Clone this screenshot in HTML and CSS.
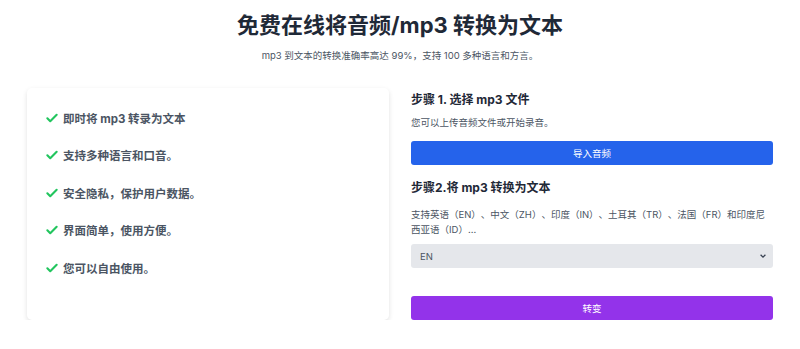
FILE: index.html
```html
<!DOCTYPE html>
<html lang="zh-CN">
<head>
    <meta charset="UTF-8">
    <meta name="viewport" content="width=device-width, initial-scale=1.0">
    <title>免费在线将音频/mp3 转换为文本</title>
    <link rel="stylesheet" href="styles.css">
</head>
<body>
    <div class="page">
        <div class="header">
            <h1>免费在线将音频/mp3 转换为文本</h1>
            <p class="subtitle">mp3 到文本的转换准确率高达 99%，支持 100 多种语言和方言。</p>
        </div>
        <div class="columns">
            <div class="card">
                <ul class="features">
                    <li><span class="check"><svg viewBox="0 0 24 24" width="14" height="14"><path d="M4 12.5l5 5L20 6.5" fill="none" stroke="#22c55e" stroke-width="3.6" stroke-linecap="round" stroke-linejoin="round"/></svg></span>即时将 mp3 转录为文本</li>
                    <li><span class="check"><svg viewBox="0 0 24 24" width="14" height="14"><path d="M4 12.5l5 5L20 6.5" fill="none" stroke="#22c55e" stroke-width="3.6" stroke-linecap="round" stroke-linejoin="round"/></svg></span>支持多种语言和口音。</li>
                    <li><span class="check"><svg viewBox="0 0 24 24" width="14" height="14"><path d="M4 12.5l5 5L20 6.5" fill="none" stroke="#22c55e" stroke-width="3.6" stroke-linecap="round" stroke-linejoin="round"/></svg></span>安全隐私，保护用户数据。</li>
                    <li><span class="check"><svg viewBox="0 0 24 24" width="14" height="14"><path d="M4 12.5l5 5L20 6.5" fill="none" stroke="#22c55e" stroke-width="3.6" stroke-linecap="round" stroke-linejoin="round"/></svg></span>界面简单，使用方便。</li>
                    <li><span class="check"><svg viewBox="0 0 24 24" width="14" height="14"><path d="M4 12.5l5 5L20 6.5" fill="none" stroke="#22c55e" stroke-width="3.6" stroke-linecap="round" stroke-linejoin="round"/></svg></span>您可以自由使用。</li>
                </ul>
            </div>
            <div class="steps">
                <h3>步骤 1. 选择 mp3 文件</h3>
                <p class="hint">您可以上传音频文件或开始录音。</p>
                <button class="btn btn-blue">导入音频</button>
                <h3 class="step-two">步骤2.将 mp3 转换为文本</h3>
                <p class="hint langs">支持英语（EN）、中文（ZH）、印度（IN）、土耳其（TR）、法国（FR）和印度尼西亚语（ID）...</p>
                <div class="select">
                    <span>EN</span>
                    <svg viewBox="0 0 10 10" width="8" height="8"><path d="M2 3.5l3 3 3-3" fill="none" stroke="#374151" stroke-width="1.6"/></svg>
                </div>
                <button class="btn btn-purple">转变</button>
            </div>
        </div>
    </div>
</body>
</html>
```

FILE: styles.css
```css
/* Base */
body {
    margin: 0;
    font-family: Inter, "Noto Sans CJK SC", sans-serif;
    background: #fff;
    color: #1f2937;
    text-spacing-trim: space-all;
}
.page {
    width: 746px;
    margin: 0 auto;
}
.header {
    text-align: center;
    padding-top: 10px;
}
h1 {
    margin: 0;
    font-size: 22px;
    line-height: 30px;
    font-weight: 700;
    color: #1f2937;
}
.subtitle {
    margin: 9px 0 0;
    font-size: 9.5px;
    line-height: 14px;
    color: #4b5563;
}
/* Two columns */
.columns {
    display: grid;
    grid-template-columns: 1fr 1fr;
    gap: 22px;
    margin-top: 25px;
}
.card {
    height: 232px;
    border-radius: 5px;
    box-shadow: 0 2px 5px rgba(0, 0, 0, 0.12);
    padding: 21px 18px;
    box-sizing: border-box;
}
.features {
    list-style: none;
    margin: 0;
    padding: 0;
}
.features li {
    display: flex;
    align-items: center;
    height: 17px;
    margin-bottom: 20.5px;
    font-size: 11.5px;
    font-weight: 700;
    color: #4b5563;
}
.check {
    display: flex;
    width: 18px;
}
/* Steps */
.steps {
    padding-top: 3px;
}
h3 {
    margin: 0;
    font-size: 12px;
    line-height: 18px;
    font-weight: 700;
    color: #1f2937;
}
.hint {
    margin: 6px 0 0;
    font-size: 9.5px;
    line-height: 15px;
    color: #4b5563;
}
.btn {
    display: block;
    width: 100%;
    height: 24px;
    border: none;
    border-radius: 3px;
    color: #fff;
    font-family: inherit;
    font-size: 9.5px;
    cursor: pointer;
}
.btn-blue {
    margin-top: 11px;
    background: #2563eb;
}
.step-two {
    margin-top: 14px;
}
.langs {
    margin-top: 10px;
}
.select {
    display: flex;
    justify-content: space-between;
    align-items: center;
    height: 24px;
    margin-top: 7px;
    padding: 0 6px 0 9px;
    border-radius: 3px;
    background: #e5e7eb;
    font-size: 9.5px;
    color: #4b5563;
}
.btn-purple {
    margin-top: 28px;
    background: #9333ea;
}
```
